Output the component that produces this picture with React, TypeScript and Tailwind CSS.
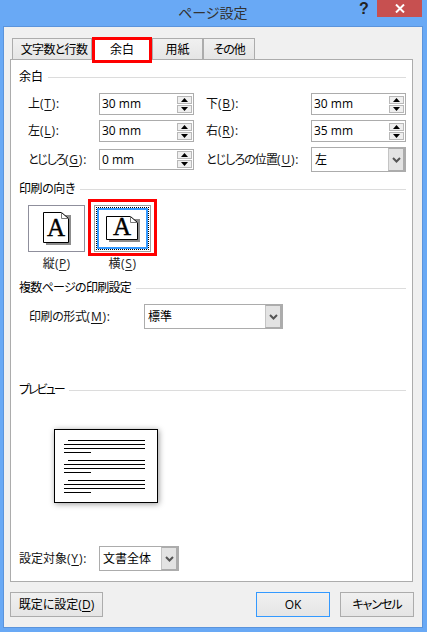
import React from "react";

const font = "font-['Open_Sans','Noto_Sans_CJK_JP',sans-serif] [font-feature-settings:'palt']";

function Heading({ text, tracking = "" }: { text: string; tracking?: string }) {
    return (
        <div className="flex items-center gap-[5px] h-4 mr-[6px] ml-2">
            <span className={"text-xs leading-4 whitespace-nowrap " + tracking}>{text}</span>
            <div className="flex-1 h-px bg-[#dcdcdc]" />
        </div>
    );
}

function Label({ before, k, width, tracking = "" }: { before: string; k: string; width: string; tracking?: string }) {
    return (
        <span className={"text-xs whitespace-nowrap text-[#111] " + width}>
            <span className={tracking}>{before}</span>
            <span className="tracking-[0.8px]">(<u className="underline-offset-2">{k}</u>):</span>
        </span>
    );
}

function SpinBtn({ up }: { up?: boolean }) {
    return (
        <div className="flex items-center justify-center w-[15px] h-[8px] bg-[#efefef] border border-[#b8b8b8]">
            <svg width="7" height="4" viewBox="0 0 7 4">
                <path d={up ? "M3.5 0L7 4H0Z" : "M0 0H7L3.5 4Z"} fill="#000" />
            </svg>
        </div>
    );
}

function Spinner({ value, height }: { value: string; height: string }) {
    return (
        <div className={"flex items-center justify-between w-[95px] border border-[#acacac] bg-white pl-[2px] pr-[1px] " + height}>
            <span className="text-xs">{value}</span>
            <div className="flex flex-col gap-px">
                <SpinBtn up />
                <SpinBtn />
            </div>
        </div>
    );
}

function Select({ value, width }: { value: string; width: string }) {
    return (
        <div className={"flex items-stretch h-[25px] border border-[#acacac] bg-white " + width}>
            <span className="flex-1 pl-[3px] text-xs leading-[23px]">{value}</span>
            <div className="flex items-center justify-center w-[17px] bg-[#e3e3e3] border-l border-[#c4c4c4] border-r-2 border-r-[#acacac] border-y border-y-[#acacac]">
                <svg width="9" height="6" viewBox="0 0 9 6">
                    <path d="M1 1L4.5 4.5L8 1" fill="none" stroke="#555" strokeWidth="2" />
                </svg>
            </div>
        </div>
    );
}

function PageIcon({ landscape }: { landscape?: boolean }) {
    const w = landscape ? 31 : 25;
    const h = landscape ? 23 : 30;
    return (
        <svg className="overflow-visible" width={w + 3} height={h + 3} viewBox={`0 0 ${w + 3} ${h + 3}`}>
            <path d={`M3 3H${w + 3}V${h + 3}H3Z`} fill="#8c8c8c" />
            <path d={`M0.5 0.5H${w - 6.5}L${w + 0.5} 6.5V${h + 0.5}H0.5Z`} fill="#fff" stroke="#000" />
            <path d={`M${w - 6.5} 0.5V6.5H${w + 0.5}`} fill="none" stroke="#777" />
            <text
                x={(w + 1) / 2}
                y={landscape ? 19 : 23.5}
                textAnchor="middle"
                fontFamily="'Liberation Serif', serif"
                fontSize="25"
                fill="#000"
                stroke="#000"
                strokeWidth="0.4"
            >
                A
            </text>
        </svg>
    );
}

function Tab({ text, width, active, tracking = "" }: { text: string; width: string; active?: boolean; tracking?: string }) {
    if (active) {
        return (
            <div className={"relative z-10 flex items-center justify-center h-[23px] -mb-px bg-white text-xs " + width}>
                {text}
                <div className="absolute -top-px -bottom-[2px] inset-x-0 border-[3px] border-[#ff0000]" />
            </div>
        );
    }
    return (
        <div className={"flex items-center justify-center h-[22px] border border-b-0 border-[#acacac] bg-gradient-to-b from-[#f0f0f0] to-[#e5e5e5] text-xs " + tracking + " " + width}>
            {text}
        </div>
    );
}

function Button({ children, width, primary }: { children: React.ReactNode; width: string; primary?: boolean }) {
    return (
        <div className={"flex items-center justify-center h-[25px] border bg-gradient-to-b from-[#f0f0f0] to-[#e5e5e5] text-xs " + (primary ? "border-[#3399ff] " : "border-[#acacac] ") + width}>
            {children}
        </div>
    );
}

function PreviewGroup() {
    return (
        <div className="flex flex-col gap-[3px]">
            <div className="h-px bg-black ml-1" />
            <div className="h-px bg-black" />
            <div className="h-px bg-black" />
            <div className="h-px bg-black w-[27px]" />
        </div>
    );
}

export default function App() {
    return (
        <div className={"flex flex-col w-[427px] h-[632px] pl-[3px] bg-[#69a9f5] text-black overflow-hidden " + font}>
            <div className="flex items-start h-[26px]">
                <span className="w-[175px]" />
                <span className="w-[70px] mt-[3px] text-sm leading-5 text-[#333] whitespace-nowrap">ページ設定</span>
                <span className="ml-[108px] mt-[-1px] w-[16px] text-center font-['Liberation_Sans',sans-serif] font-bold text-base leading-5 text-[#222]">?</span>
                <div className="flex items-center justify-center ml-[5px] w-[45px] h-[17px] bg-[#c75050]">
                    <svg width="10" height="9" viewBox="0 0 10 9">
                        <path d="M1 0.5L9 8.5M9 0.5L1 8.5" stroke="#fff" strokeWidth="2" />
                    </svg>
                </div>
            </div>

            <div className="flex flex-col w-[420px] h-[602px] pl-[6px] pt-[10px] border border-[#5b94dc] bg-[#f0f0f0]">
                <div className="flex items-end pl-[2px] h-[23px]">
                    <Tab text="文字数と行数" width="w-[80px] pl-[4px]" tracking="tracking-[-0.7px]" />
                    <Tab text="余白" width="w-[60px]" active />
                    <Tab text="用紙" width="w-[51px]" />
                    <Tab text="その他" width="w-[52px]" tracking="tracking-[-1px]" />
                </div>

                <div className="flex flex-col w-[403px] h-[523px] -mt-px pt-[9px] border border-[#acacac] bg-white">
                    <Heading text="余白" />

                    <div className="flex flex-col gap-[5px] mt-2 pl-[17px]">
                        <div className="flex items-center h-[22px]">
                            <Label before="上" k="T" width="w-[71px]" />
                            <Spinner value="30 mm" height="h-[22px]" />
                            <div className="w-3" />
                            <Label before="下" k="B" width="w-[105px]" />
                            <Spinner value="30 mm" height="h-[22px]" />
                        </div>
                        <div className="flex items-center h-[22px]">
                            <Label before="左" k="L" width="w-[71px]" />
                            <Spinner value="30 mm" height="h-[22px]" />
                            <div className="w-3" />
                            <Label before="右" k="R" width="w-[105px]" />
                            <Spinner value="35 mm" height="h-[22px]" />
                        </div>
                        <div className="flex items-center h-[25px]">
                            <Label before="とじしろ" k="G" width="w-[71px]" tracking="tracking-[-1.2px]" />
                            <Spinner value="0 mm" height="h-[21px]" />
                            <div className="w-3" />
                            <Label before="とじしろの位置" k="U" width="w-[105px]" tracking="tracking-[-0.9px]" />
                            <Select value="左" width="w-[95px]" />
                        </div>
                    </div>

                    <div className="mt-[9px]">
                        <Heading text="印刷の向き" tracking="tracking-[-0.4px]" />
                    </div>

                    <div className="flex mt-2 pl-[17px] gap-[9px]">
                        <div className="flex flex-col items-center w-[57px]">
                            <div className="flex items-center justify-center w-[57px] h-[47px] border border-[#8f8f9c] bg-white">
                                <PageIcon />
                            </div>
                            <span className="mt-1 text-xs leading-4 text-[#222] tracking-[0.3px]">縦(<u className="underline-offset-2">P</u>)</span>
                        </div>
                        <div className="flex flex-col items-center w-[57px]">
                            <div className="relative w-[57px] h-[47px] border border-[#a0a0a0] bg-white p-px">
                                <div className="h-full border border-dotted border-black">
                                    <div className="flex items-center justify-center h-full border-2 border-[#3399ff]">
                                        <PageIcon landscape />
                                    </div>
                                </div>
                                <div className="absolute -top-[7px] -bottom-[5px] -inset-x-[7px] border-[3px] border-[#ff0000]" />
                            </div>
                            <span className="mt-1 text-xs leading-4 text-[#222] tracking-[0.6px]">横(<u className="underline-offset-2">S</u>)</span>
                        </div>
                    </div>

                    <div className="mt-2">
                        <Heading text="複数ページの印刷設定" tracking="tracking-[-0.7px]" />
                    </div>

                    <div className="flex items-center mt-2 pl-[18px]">
                        <Label before="印刷の形式" k="M" width="w-[115px]" tracking="tracking-[-0.4px]" />
                        <Select value="標準" width="w-[139px]" />
                    </div>

                    <div className="mt-[53px]">
                        <Heading text="プレビュー" tracking="tracking-[-2px]" />
                    </div>

                    <div className="flex flex-col gap-[7px] w-[104px] h-[74px] mt-[31px] ml-[43px] pt-[10px] pl-[9px] pr-3 border border-black bg-white shadow-[1px_1px_6px_rgba(0,0,0,0.4)]">
                        <PreviewGroup />
                        <PreviewGroup />
                        <PreviewGroup />
                    </div>

                    <div className="flex items-center mt-[43px] pl-2">
                        <Label before="設定対象" k="Y" width="w-[80px]" />
                        <Select value="文書全体" width="w-[80px]" />
                    </div>
                </div>

                <div className="flex mt-[10px] w-[404px]">
                    <Button width="w-[93px]">
                        <span>既定に設定(<u className="underline-offset-2">D</u>)</span>
                    </Button>
                    <div className="flex-1" />
                    <Button width="w-[74px]" primary>OK</Button>
                    <div className="w-[10px]" />
                    <Button width="w-[74px]"><span className="tracking-[-1px]">キャンセル</span></Button>
                </div>
            </div>
        </div>
    );
}
